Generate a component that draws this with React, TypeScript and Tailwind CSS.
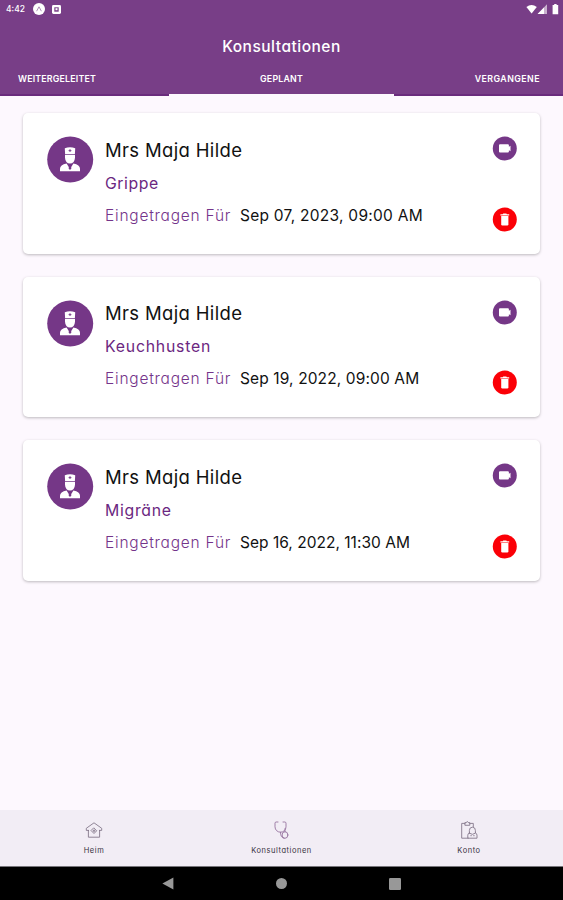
import { ReactNode } from "react";

interface Consultation {
  id: number;
  name: string;
  reason: string;
  date: string;
  dateClass: string;
  reasonClass: string;
}

const consultations: Consultation[] = [
  {
    id: 1,
    name: "Mrs Maja Hilde",
    reason: "Grippe",
    date: "Sep 07, 2023, 09:00 AM",
    dateClass: "tracking-[0.26px]",
    reasonClass: "tracking-[0.55px]",
  },
  {
    id: 2,
    name: "Mrs Maja Hilde",
    reason: "Keuchhusten",
    date: "Sep 19, 2022, 09:00 AM",
    dateClass: "tracking-[0.12px]",
    reasonClass: "tracking-[0.78px]",
  },
  {
    id: 3,
    name: "Mrs Maja Hilde",
    reason: "Migräne",
    date: "Sep 16, 2022, 11:30 AM",
    dateClass: "tracking-[0.02px]",
    reasonClass: "tracking-[0.7px]",
  },
];

function StatusBar() {
  return (
    <div className="flex h-[18px] items-center justify-between pr-[4px] pl-[6px] text-white">
      <div className="flex items-center">
        <span className="w-[27px] text-[8.5px] font-medium">4:42</span>
        <svg width="12" height="12" viewBox="0 0 12 12">
          <circle cx="6" cy="6" r="6" fill="#fff" />
          <path d="M3.6 8.2 6 3.8l2.4 4.4" fill="none" stroke="#783e87" strokeWidth="0.9" opacity="0.65" />
        </svg>
        <svg className="ml-[7px]" width="9" height="9" viewBox="0 0 9 9">
          <rect width="9" height="9" rx="1.4" fill="#fff" />
          <rect x="2.3" y="2.3" width="4.4" height="4.4" fill="#783e87" />
          <rect x="3.5" y="3.2" width="2" height="2" fill="#fff" />
        </svg>
      </div>
      <svg width="33" height="11" viewBox="0 0 33 11">
        <path d="M.4 3Q5.5-1.2 10.8 3L5.6 9.4Z" fill="#fff" />
        <path d="M21 .3v9.6h-9.4Z" fill="#fff" opacity="0.6" />
        <path d="M18 3.4v6.5h-6.4Z" fill="#fff" />
        <path d="M26.6 1h1.6V0h2.4v1h1.6v9.3h-5.6Z" fill="#fff" />
      </svg>
    </div>
  );
}

function Header() {
  return (
    <header className="h-[96px] bg-[#783e87] text-white">
      <StatusBar />
      <h1 className="h-[42px] pt-[17px] text-center text-[15.5px] leading-6 font-medium tracking-[0.5px]">
        Konsultationen
      </h1>
      <nav className="grid h-[36px] grid-cols-[169px_225px_169px] text-[8.8px] leading-[37px] font-semibold">
        <span className="h-[36px] border-b-2 border-[#6a2c7d] pl-[18px] tracking-[0.2px]">WEITERGELEITET</span>
        <span className="h-[36px] border-b-2 border-[#fdf8fe] text-center tracking-[0.2px]">GEPLANT</span>
        <span className="h-[36px] border-b-2 border-[#6a2c7d] pr-[23px] text-right tracking-[0.45px]">
          VERGANGENE
        </span>
      </nav>
    </header>
  );
}

function DoctorAvatar() {
  return (
    <svg className="mt-[23px] ml-[24px] shrink-0" width="47" height="47" viewBox="0 0 47 47">
      <circle cx="23.2" cy="23.5" r="23" fill="#753787" />
      <path d="M17.8 12.2q5.2-1.8 10.4 0l-.3 6h-9.8Z" fill="#fff" />
      <path d="M23 13.2v2.8M21.6 14.6h2.8" stroke="#753787" strokeWidth="0.9" />
      <path d="M18 19h10v2.7q-.4 5.8-5 5.8t-5-5.8Z" fill="#fff" />
      <path d="M13 35.2v-2.5q0-4.2 6.6-5.3L23 33l3.4-5.6q6.6 1.1 6.6 5.3v2.5Z" fill="#fff" />
      <path d="M21.5 28.4h3l-.6 1.7.5 2.4-1.4 1.5-1.4-1.5.5-2.4Z" fill="#753787" />
    </svg>
  );
}

function ConsultationCard({ item }: { item: Consultation }) {
  return (
    <article className="flex h-[140.5px] rounded-[5px] bg-white shadow-[0_1px_3px_rgba(0,0,0,0.26)]">
      <DoctorAvatar />
      <div className="ml-[11px] flex-1 whitespace-nowrap">
        <h2 className="mt-[24.8px] text-[18.5px] leading-6 tracking-[0.34px] text-[#111]">{item.name}</h2>
        <p className={`mt-[11px] text-[15.8px] leading-[22px] text-[#6b2781] ${item.reasonClass}`}>
          {item.reason}
        </p>
        <p className="mt-[10px] flex text-[15.5px] leading-[22px]">
          <span className="w-[135px] font-light tracking-[0.77px] text-[#74348a]">Eingetragen Für</span>
          <span className={`text-[#111] ${item.dateClass}`}>{item.date}</span>
        </p>
      </div>
      <div className="mt-[23px] mr-[23px] flex flex-col gap-[45.5px]">
        <button aria-label="Video">
          <svg width="25" height="25" viewBox="0 0 25 25">
            <circle cx="12.8" cy="12.5" r="12" fill="#753787" />
            <path
              d="M8 8.2h7.9q1 0 1 1v1.6l1.6-1.1v5.6l-1.6-1.1v1.4q0 1-1 1H8q-1 0-1-1V9.2q0-1 1-1Z"
              fill="#fff"
            />
          </svg>
        </button>
        <button aria-label="Löschen">
          <svg width="25" height="25" viewBox="0 0 25 25">
            <circle cx="12.8" cy="12.5" r="12" fill="#fb0007" />
            <path d="M8.4 7.2h2.3l.6-.7h3l.6.7h2.3v1.3H8.4Z" fill="#fff" />
            <path d="M9.2 9h7.2v8.3q0 1.2-1.2 1.2h-4.8q-1.2 0-1.2-1.2Z" fill="#fff" />
          </svg>
        </button>
      </div>
    </article>
  );
}

function NavItem({ label, children }: { label: string; children: ReactNode }) {
  return (
    <div className="flex flex-col items-center pt-[10px]">
      <svg
        width="20"
        height="20"
        viewBox="0 0 20 20"
        fill="none"
        stroke="#85788b"
        strokeWidth="0.9"
        strokeLinejoin="round"
        strokeLinecap="round"
      >
        {children}
      </svg>
      <span className="mt-[5px] text-[7.5px] leading-[11px] tracking-[0.55px] text-[#38313d]">{label}</span>
    </div>
  );
}

export default function App() {
  return (
    <div className="flex h-[900px] w-[563px] flex-col bg-[#fdf8fe] font-['Inter',sans-serif] [font-feature-settings:'cv11']">
      <Header />
      <main className="flex flex-1 flex-col gap-[23.2px] px-[23px] pt-[17px]">
        {consultations.map((item) => (
          <ConsultationCard key={item.id} item={item} />
        ))}
      </main>
      <nav className="grid h-[56px] grid-cols-[188px_187px_188px] bg-[#f2edf5]">
        <NavItem label="Heim">
          <path d="M4.6 10.4H2.3V8.3L10 2.8l7.7 5.5v2.1h-2.3M4.4 10.4v6.8h11.2v-6.8" />
          <path d="M10 8.1l2.7 2.7-2.7 2.7-2.7-2.7Z" />
          <path d="M10 9.9v1.8M9.1 10.8h1.8" />
        </NavItem>
        <NavItem label="Konsultationen">
          <g stroke="#95729e">
            <path d="M6 2H4.2q-1.2 0-1.2 1.2v3.6c0 3.2 2.6 5.4 5.5 5.4s5.5-2.2 5.5-5.4V3.2Q14 2 12.8 2H11" />
            <path d="M8.5 12.2c0 3.6 1 5.6 3.6 6.1" />
            <path d="M13 8.6v3.2" />
            <ellipse cx="13" cy="15" rx="2.9" ry="3.3" />
          </g>
        </NavItem>
        <NavItem label="Konto">
          <path d="M9.2 18.2H2.7V3.4h3.2M10.8 3.4h3.5v3.4M5.9 4.9V2.6h1.5l.9-1.2.9 1.2h1.6v2.3Z" />
          <path d="M10.4 13.2V10.4q0-3.2 3-3.2t3 3.2v2.8q-3 2.4-6 0Z" />
          <path d="M10.4 12.6q-1.6 1-1.6 2.6v3h9.2v-3q0-1.6-1.6-2.6M11.8 15.7h.6M14.6 15.7h.6" />
        </NavItem>
      </nav>
      <footer className="flex h-[34px] items-center justify-center gap-[102px] border-t border-[#77757a] bg-black text-[#989898]">
        <svg width="12" height="13" viewBox="0 0 12 13" fill="currentColor">
          <path d="M.4 6.5 11.4.4v12.2Z" />
        </svg>
        <svg width="11" height="11" viewBox="0 0 11 11" fill="currentColor">
          <circle cx="5.5" cy="5.5" r="5.5" />
        </svg>
        <svg width="12" height="12" viewBox="0 0 12 12" fill="currentColor">
          <rect width="12" height="12" rx="1.2" />
        </svg>
      </footer>
    </div>
  );
}
